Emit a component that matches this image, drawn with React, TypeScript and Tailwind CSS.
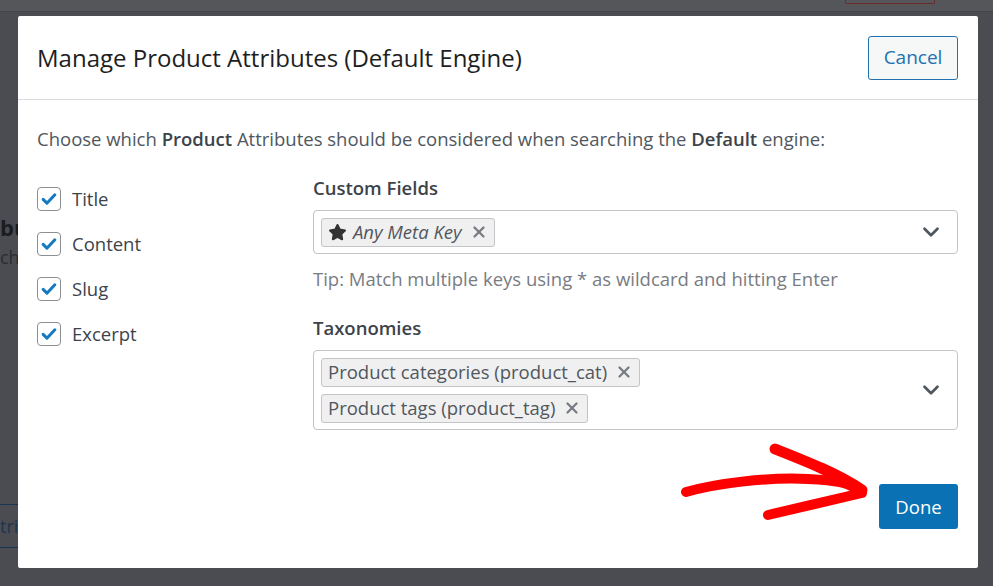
import { Star, X, ChevronDown } from "lucide-react";

function CheckRow({ label }: { label: string }) {
  return (
    <label className="flex items-center gap-[11px] h-[24px]">
      <span className="h-[24px] w-[24px] rounded-[4px] border border-[#8c8f94] bg-white flex items-center justify-center shrink-0">
        <svg viewBox="0 0 24 24" className="h-[20px] w-[20px]" fill="none">
          <path d="M5 12.5l4.5 4.5L19 7" stroke="#1479c1" strokeWidth="3.6" strokeLinecap="round" strokeLinejoin="round" />
        </svg>
      </span>
      <span className="text-[18.5px] text-[#3c434a] leading-none">{label}</span>
    </label>
  );
}

function Tag({ children, italic }: { children: React.ReactNode; italic?: boolean }) {
  return (
    <span className="inline-flex items-center h-[29px] px-[6px] gap-[8px] rounded-[3px] border border-[#c3c4c7] bg-[#f0f0f1] text-[18.5px] text-[#50575e]">
      <span className={italic ? "italic flex items-center gap-[6px]" : "flex items-center"}>{children}</span>
      <X className="h-[18px] w-[18px] text-[#787c82]" strokeWidth={3} />
    </span>
  );
}

export default function App() {
  return (
    <div className="relative h-[586px] w-[993px] overflow-hidden bg-[#4b4c51] font-['Open_Sans',sans-serif]">
      {/* Page behind the overlay */}
      <div className="h-[12px] border-b border-[#44454a] bg-[#55565a] flex justify-end pr-[58px]">
        <div className="w-[90px] h-[4px] border-x border-b border-[#6e2a2a] rounded-b-[2px]" />
      </div>
      <div className="pt-[200px]">
        <p className="text-[22px] font-bold text-[#1b1c1f] leading-[30px]">bu</p>
        <p className="text-[18px] text-[#2c2d31] leading-[30px]">ch</p>
      </div>
      <div className="mt-[232px] w-[40px] h-[44px] border-y border-[#1a3550] flex items-center">
        <span className="text-[18px] text-[#1d3550]">tri</span>
      </div>

      {/* Modal */}
      <div className="absolute left-[18px] top-[16px] w-[960px] h-[552px] bg-white rounded-[2px] flex flex-col">
        <div className="h-[84px] border-b border-[#dcdcde] flex items-center justify-between pl-[19px] pr-[20px]">
          <h2 className="text-[24px] text-[#1e1e1e] font-normal leading-[32px]">Manage Product Attributes (Default Engine)</h2>
          <button className="h-[44px] w-[90px] rounded-[3px] border border-[#2271b1] bg-[#f6f7f7] text-[19px] text-[#2271b1]">
            Cancel
          </button>
        </div>

        <div className="flex-1 flex flex-col pl-[19px] pr-[20px] pt-[27px]">
          <p className="text-[18.5px] text-[#50575e] leading-[24px]">
            Choose which <b className="font-semibold text-[#3c434a]">Product</b> Attributes should be considered when searching the{" "}
            <b className="font-semibold text-[#3c434a]">Default</b> engine:
          </p>

          <div className="flex mt-[25px]">
            <div className="w-[276px] flex flex-col gap-[21px] pt-[11px]">
              <CheckRow label="Title" />
              <CheckRow label="Content" />
              <CheckRow label="Slug" />
              <CheckRow label="Excerpt" />
            </div>

            <div className="flex-1 flex flex-col">
              <h3 className="text-[18.5px] font-semibold text-[#3c434a] leading-[24px]">Custom Fields</h3>
              <div className="mt-[10px] h-[44px] rounded-[4px] border border-[#c3c4c7] flex items-center justify-between pl-[7px] pr-[13px]">
                <Tag italic>
                  <Star className="h-[19px] w-[19px] text-[#333] fill-[#333]" strokeWidth={1.5} />
                  Any Meta Key
                </Tag>
                <ChevronDown className="h-[26px] w-[26px] text-[#50575e]" strokeWidth={2.5} />
              </div>
              <p className="mt-[13px] text-[18.5px] text-[#787c82] leading-[24px]">
                Tip: Match multiple keys using * as wildcard and hitting Enter
              </p>

              <h3 className="mt-[25px] text-[18.5px] font-semibold text-[#3c434a] leading-[24px]">Taxonomies</h3>
              <div className="mt-[10px] h-[80px] rounded-[4px] border border-[#c3c4c7] flex items-center justify-between pl-[7px] pr-[13px]">
                <div className="flex flex-col items-start gap-[7px]">
                  <Tag>Product categories (product_cat)</Tag>
                  <Tag>Product tags (product_tag)</Tag>
                </div>
                <ChevronDown className="h-[26px] w-[26px] text-[#50575e]" strokeWidth={2.5} />
              </div>
            </div>
          </div>

          <div className="mt-auto mb-[39px] flex justify-end">
            <button className="h-[45px] w-[79px] rounded-[3px] bg-[#0a72b4] text-[18.5px] text-white">Done</button>
          </div>
        </div>

        {/* Red annotation arrow */}
        <svg className="absolute left-[660px] top-[420px] w-[210px] h-[120px] pointer-events-none" viewBox="0 0 210 120" fill="none">
          <path d="M8 56 C 40 47, 90 41, 130 43 S 168 48, 184 55" stroke="#ff0000" strokeWidth="10" strokeLinecap="round" />
          <path d="M97 13 C 130 26, 160 38, 184 54" stroke="#ff0000" strokeWidth="11" strokeLinecap="round" />
          <path d="M90 79 C 120 72, 155 64, 184 57" stroke="#ff0000" strokeWidth="10" strokeLinecap="round" />
        </svg>
      </div>
    </div>
  );
}
